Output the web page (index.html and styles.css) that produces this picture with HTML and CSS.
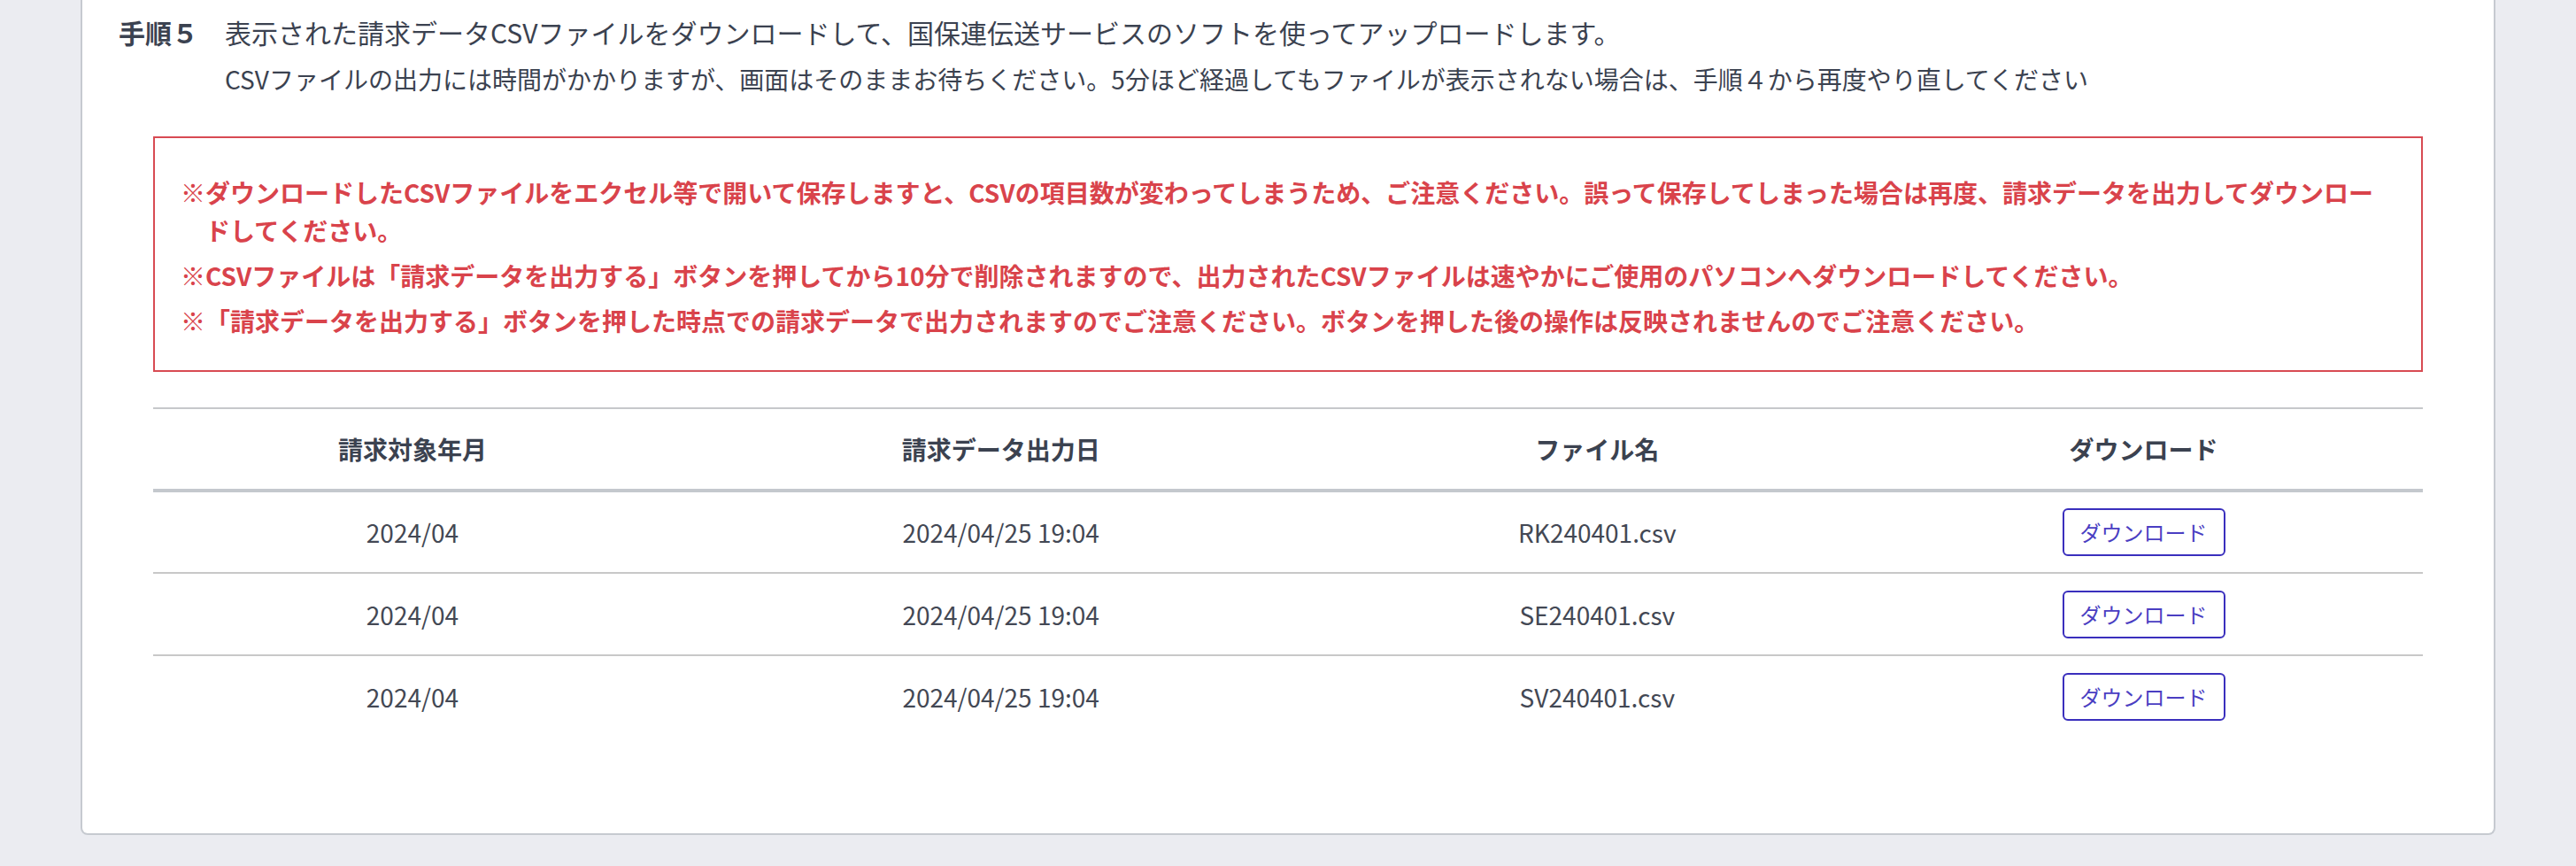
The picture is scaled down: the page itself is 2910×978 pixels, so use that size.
FILE: index.html
```html
<!DOCTYPE html>
<html lang="ja">
<head>
  <meta charset="UTF-8" />
  <title>請求データ出力</title>
  <link rel="stylesheet" href="styles.css">
</head>
<body>
  <div class="card">
    <!-- Step 5 -->
    <div class="step">
      <span class="step-label">手順５</span>
      <span class="step-title">表示された請求データCSVファイルをダウンロードして、国保連伝送サービスのソフトを使ってアップロードします。</span>
    </div>
    <p class="step-note">CSVファイルの出力には時間がかかりますが、画面はそのままお待ちください。5分ほど経過してもファイルが表示されない場合は、手順４から再度やり直してください</p>

    <div class="notice">
      <ul>
        <li>※ダウンロードしたCSVファイルをエクセル等で開いて保存しますと、CSVの項目数が変わってしまうため、ご注意ください。誤って保存してしまった場合は再度、請求データを出力してダウンロードしてください。</li>
        <li>※CSVファイルは「請求データを出力する」ボタンを押してから10分で削除されますので、出力されたCSVファイルは速やかにご使用のパソコンへダウンロードしてください。</li>
        <li>※「請求データを出力する」ボタンを押した時点での請求データで出力されますのでご注意ください。ボタンを押した後の操作は反映されませんのでご注意ください。</li>
      </ul>
    </div>

    <table class="files">
      <colgroup>
        <col class="c1"><col class="c2"><col class="c3"><col class="c4">
      </colgroup>
      <thead>
        <tr>
          <th>請求対象年月</th>
          <th>請求データ出力日</th>
          <th>ファイル名</th>
          <th>ダウンロード</th>
        </tr>
      </thead>
      <tbody>
        <tr>
          <td>2024/04</td>
          <td>2024/04/25 19:04</td>
          <td>RK240401.csv</td>
          <td><button class="btn">ダウンロード</button></td>
        </tr>
        <tr>
          <td>2024/04</td>
          <td>2024/04/25 19:04</td>
          <td>SE240401.csv</td>
          <td><button class="btn">ダウンロード</button></td>
        </tr>
        <tr>
          <td>2024/04</td>
          <td>2024/04/25 19:04</td>
          <td>SV240401.csv</td>
          <td><button class="btn">ダウンロード</button></td>
        </tr>
      </tbody>
    </table>
  </div>
</body>
</html>
```

FILE: styles.css
```css
* {
  box-sizing: border-box;
}
body {
  margin: 0;
  background: #ebecf1;
  font-family: "Noto Sans CJK JP", "Noto Sans", sans-serif;
  color: #3b4250;
}

.card {
  margin: 0 91px;
  height: 943px;
  background: #fff;
  border: 2px solid #c6cad0;
  border-top: none;
  border-radius: 0 0 8px 8px;
  padding: 14px 80px 0 41px;
}

.step {
  display: flex;
  font-size: 30px;
  line-height: 45px;
}
.step-label {
  width: 120px;
  flex-shrink: 0;
  font-weight: bold;
}

.step-note {
  margin: 9px 0 0 120px;
  font-size: 28px;
  line-height: 42px;
}

.notice {
  margin: 44px 0 0 39px;
  border: 2px solid #d84b53;
  padding: 40px 28px 34px 29px;
  color: #d9434b;
  font-weight: bold;
  font-size: 28px;
  line-height: 43px;
}
.notice ul {
  margin: 0;
  padding: 0;
  list-style: none;
}
.notice li {
  padding-left: 1em;
  text-indent: -1em;
}
.notice li + li {
  margin-top: 8px;
}

.files {
  margin: 40px 0 0 39px;
  width: calc(100% - 39px);
  border-collapse: collapse;
  table-layout: fixed;
  border-top: 2px solid #c6c8cb;
  font-size: 28px;
}
.files .c1 { width: 22.85%; }
.files .c2 { width: 29%; }
.files .c3 { width: 23.55%; }
.files .c4 { width: 24.6%; }

.files th {
  height: 93px;
  font-weight: bold;
  color: #3b4250;
  border-bottom: 4px solid #c4c8cd;
  padding: 0;
}
.files td {
  height: 93px;
  text-align: center;
  color: #434854;
  padding: 0;
}
.files tbody tr + tr td {
  border-top: 2px solid #c8c8c8;
}

.btn {
  font-family: inherit;
  font-size: 24px;
  line-height: 34px;
  color: #4a3ec2;
  background: #fff;
  border: 2px solid #3a2fbd;
  border-radius: 6px;
  padding: 8px 18px;
  cursor: pointer;
}
```
